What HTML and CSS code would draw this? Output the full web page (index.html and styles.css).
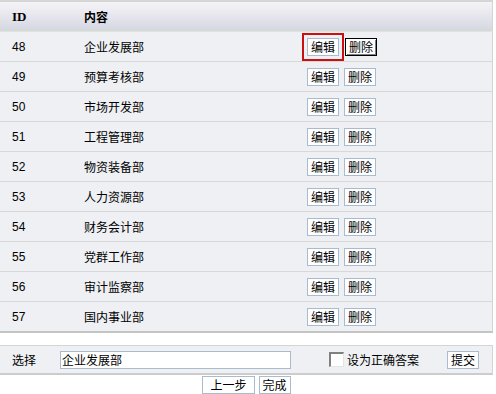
FILE: index.html
```html
<!DOCTYPE html>
<html lang="zh-CN">
<head>
    <meta charset="UTF-8">
    <title>部门列表</title>
    <link rel="stylesheet" href="styles.css">
</head>
<body>
    <div class="wrap">
        <!-- List -->
        <table class="list">
            <thead>
                <tr>
                    <th class="col-id">ID</th>
                    <th class="col-name">内容</th>
                    <th class="col-op"></th>
                </tr>
            </thead>
            <tbody>
                <tr><td>48</td><td>企业发展部</td><td><button class="btn focus">编辑</button><button class="btn pressed">删除</button></td></tr>
                <tr><td>49</td><td>预算考核部</td><td><button class="btn">编辑</button><button class="btn">删除</button></td></tr>
                <tr><td>50</td><td>市场开发部</td><td><button class="btn">编辑</button><button class="btn">删除</button></td></tr>
                <tr><td>51</td><td>工程管理部</td><td><button class="btn">编辑</button><button class="btn">删除</button></td></tr>
                <tr><td>52</td><td>物资装备部</td><td><button class="btn">编辑</button><button class="btn">删除</button></td></tr>
                <tr><td>53</td><td>人力资源部</td><td><button class="btn">编辑</button><button class="btn">删除</button></td></tr>
                <tr><td>54</td><td>财务会计部</td><td><button class="btn">编辑</button><button class="btn">删除</button></td></tr>
                <tr><td>55</td><td>党群工作部</td><td><button class="btn">编辑</button><button class="btn">删除</button></td></tr>
                <tr><td>56</td><td>审计监察部</td><td><button class="btn">编辑</button><button class="btn">删除</button></td></tr>
                <tr><td>57</td><td>国内事业部</td><td><button class="btn">编辑</button><button class="btn">删除</button></td></tr>
            </tbody>
        </table>

        <!-- Select bar -->
        <div class="select-bar">
            <span class="select-label">选择</span>
            <input type="text" class="select-input" value="企业发展部">
            <label class="check"><span class="check-box"></span>设为正确答案</label>
            <button class="btn">提交</button>
        </div>

        <div class="steps">
            <button class="btn wide">上一步</button><button class="btn">完成</button>
        </div>
    </div>
</body>
</html>
```

FILE: styles.css
```css
body {
    margin: 0;
    background: #fff;
    color: #000;
    font-family: "Liberation Sans", "Noto Sans CJK SC", sans-serif;
    font-size: 12px;
}
.wrap {
    width: 493px;
}
.list {
    width: 493px;
    border-collapse: collapse;
    border-top: 2px solid #d6d6d6;
    border-right: 1px solid #d4d4d4;
}
.list th {
    height: 29px;
    padding: 0 0 0 12px;
    text-align: left;
    font-weight: bold;
    font-size: 12px;
    background: linear-gradient(#f4f4f7, #d6d6e2);
    border-bottom: 1px solid #dbe8d2;
}
.list th.col-id {
    width: 60px;
    font-family: "Liberation Serif", serif;
    font-size: 13px;
}
.list th.col-name {
    width: 211px;
}
.list td {
    height: 29px;
    padding: 0 0 0 12px;
    background: #eef0f4;
    border-bottom: 1px solid #d8d8d8;
    vertical-align: middle;
}
.list tbody tr:last-child td {
    border-bottom: 2px solid #c4c4c4;
}
.btn {
    font-family: "Noto Sans CJK SC", sans-serif;
    font-size: 12px;
    line-height: 14px;
    height: 18px;
    padding: 0 3px;
    margin: 0 5px 0 0;
    background: #fff;
    border: 1px solid #a9bccf;
    color: #000;
    vertical-align: middle;
}
.btn.focus {
    outline: 2px solid #cc1010;
    outline-offset: 3px;
    margin-right: 6px;
}
.btn.pressed {
    border: 1px solid #000;
    box-shadow: inset 1px 1px 0 #fff, inset -1px -1px 0 #808080;
}
.select-bar {
    margin-top: 12px;
    height: 27px;
    display: flex;
    align-items: center;
    background: #eef0f4;
    border-top: 1px solid #d4d4d4;
    border-bottom: 2px solid #cccccc;
    border-right: 1px solid #d4d4d4;
}
.select-label {
    font-family: "Noto Sans CJK SC", sans-serif;
    padding-left: 12px;
    width: 48px;
    flex: none;
}
.select-input {
    flex: none;
    width: 231px;
    height: 18px;
    box-sizing: border-box;
    padding: 0 1px;
    margin: 0;
    border: 1px solid #a9bccf;
    font-family: "Noto Sans CJK SC", sans-serif;
    font-size: 12px;
}
.check {
    display: flex;
    align-items: center;
    flex: none;
    margin-left: 38px;
    width: 118px;
    font-family: "Noto Sans CJK SC", sans-serif;
}
.check-box {
    width: 12px;
    height: 12px;
    margin-right: 3px;
    background: #fff;
    border-top: 2px solid #808080;
    border-left: 2px solid #808080;
    border-right: 1px solid #e4e4e4;
    border-bottom: 1px solid #e4e4e4;
}
.steps {
    display: flex;
    justify-content: center;
    padding-top: 1px;
}
.steps .btn {
    margin: 0 2px;
}
.steps .btn.wide {
    padding: 0 7px;
}
```
